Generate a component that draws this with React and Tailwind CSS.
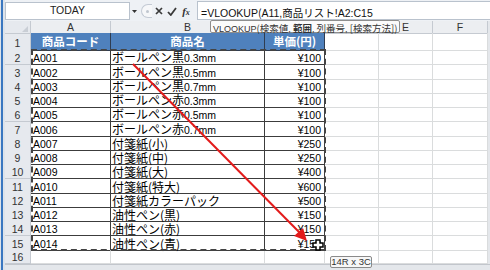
import React from "react";

const LAT = "font-['Liberation_Sans',sans-serif]";
const CJK = "font-['Noto_Sans_CJK_JP',sans-serif]";
const RE = /[A-Za-z0-9.¥=:!,]+|[^A-Za-z0-9.¥=:!,]+/g;

function Mixed({ s, lat, cjk }) {
  const parts = s.match(RE) || [];
  return (
    <span className="whitespace-pre">
      {parts.map((p, i) =>
        /[A-Za-z0-9.¥=:!,]/.test(p[0]) ? (
          <span key={i} className={`${LAT} ${lat}`}>{p}</span>
        ) : (
          <span key={i} className={`${CJK} ${cjk}`}>{p}</span>
        )
      )}
    </span>
  );
}

const rows = [
  ["A001", "ボールペン黒0.3mm", "¥100"],
  ["A002", "ボールペン黒0.5mm", "¥100"],
  ["A003", "ボールペン黒0.7mm", "¥100"],
  ["A004", "ボールペン赤0.3mm", "¥100"],
  ["A005", "ボールペン赤0.5mm", "¥100"],
  ["A006", "ボールペン赤0.7mm", "¥100"],
  ["A007", "付箋紙(小)", "¥250"],
  ["A008", "付箋紙(中)", "¥250"],
  ["A009", "付箋紙(大)", "¥400"],
  ["A010", "付箋紙(特大)", "¥600"],
  ["A011", "付箋紙カラーパック", "¥500"],
  ["A012", "油性ペン(黒)", "¥150"],
  ["A013", "油性ペン(赤)", "¥150"],
  ["A014", "油性ペン(青)", "¥150"],
];

const heights = [
  "h-[15px]", "h-[14px]", "h-[14px]", "h-[14px]", "h-[15px]", "h-[14px]", "h-[14px]",
  "h-[14px]", "h-[15px]", "h-[14px]", "h-[14px]", "h-[14px]", "h-[15px]", "h-[14px]",
];

const GRID = "grid grid-cols-[26px_80px_154px_60px_54px_54px_55px_2px]";
const RH = "bg-[#e6e9ee] border-r border-b border-[#c5cad1] flex items-end justify-center text-[10.5px] leading-[12px] text-[#333] " + LAT;
const DARK = "border-r border-b border-[#3c3c3c] flex items-end leading-[12px] whitespace-nowrap";
const LIGHT = "border-r border-b border-[#dadcdd]";

function Row({ n, h, a, b, c, last }) {
  return (
    <div className={`${GRID} ${h}`}>
      <div className={RH}>{n}</div>
      {last ? (
        <>
          <div className={LIGHT}></div>
          <div className={LIGHT}></div>
          <div className={LIGHT}></div>
        </>
      ) : (
        <>
          <div className={`${DARK} pl-[2px] text-black`}>
            <Mixed s={a} lat="text-[10.5px]" cjk="text-[12px]" />
          </div>
          <div className={`${DARK} pl-[1px] text-black`}>
            <Mixed s={b} lat="text-[10.5px]" cjk="text-[12px]" />
          </div>
          <div className={`${DARK} justify-end pr-[3px] text-black`}>
            <Mixed s={c} lat="text-[10.5px]" cjk="text-[12px]" />
          </div>
        </>
      )}
      <div className={LIGHT}></div>
      <div className={LIGHT}></div>
      <div className={LIGHT}></div>
      <div className="bg-[#e4e7eb]"></div>
    </div>
  );
}

export default function App() {
  return (
    <div className="relative w-[490px] h-[270px] overflow-hidden bg-white flex">
      {/* left window strip */}
      <div className="w-[5px] h-full bg-[#dde3ea] flex pl-[1px]">
        <div className="w-[2px] h-full bg-[#3a77c0]"></div>
      </div>

      <div className="flex-1 flex flex-col">
        {/* formula bar */}
        <div className="h-[21px] bg-[#eef1f5] flex items-start pt-[2px]">
          <div className={`w-[125px] h-[18px] bg-white border border-[#b9c2cd] flex items-center justify-center text-[10.5px] text-[#222] ${LAT}`}>
            TODAY
          </div>
          <div className="w-[8px] h-[18px] flex items-center justify-center">
            <svg width="5" height="3" viewBox="0 0 5 3"><path d="M0 0H5L2.5 3Z" fill="#333" /></svg>
          </div>
          <div className="ml-[3px] mt-[2px] w-[11px] h-[14px] rounded-l-full border border-r-0 border-[#c3cad4] bg-[#f6f7f9] flex items-center justify-center">
            <div className="w-[3px] h-[3px] rounded-full bg-[#c0c6cf]"></div>
          </div>
          <div className="w-[14px] h-[18px] flex items-center justify-center">
            <svg width="8" height="8" viewBox="0 0 8 8"><path d="M1 1L7 7M7 1L1 7" stroke="#3a3a3a" strokeWidth="1.7" /></svg>
          </div>
          <div className="w-[11px] h-[18px] flex items-center justify-center">
            <svg width="10" height="9" viewBox="0 0 10 9"><path d="M1 5L3.8 8L9 1" stroke="#3a3a3a" strokeWidth="1.8" fill="none" /></svg>
          </div>
          <div className={`w-[18px] h-[18px] flex items-center justify-center italic font-bold text-[11px] text-[#333] font-['Liberation_Serif',serif]`}>
            f<span className="text-[8px] mt-[3px]">x</span>
          </div>
          <div className="ml-[2px] flex-1 h-[19px] -mt-[1px] bg-white border border-r-0 border-[#b9c2cd] flex items-center pl-[3px] text-[#111] whitespace-nowrap">
            <Mixed s="=VLOOKUP(A11,商品リスト!A2:C15" lat="text-[10.5px]" cjk="text-[10.5px]" />
          </div>
        </div>

        {/* column headers */}
        <div className={`${GRID} h-[12px]`}>
          <div className="bg-[#e6e9ee] border-r border-b border-[#c5cad1] relative">
            <svg className="absolute right-[2px] bottom-[1px]" width="6" height="6" viewBox="0 0 6 6"><path d="M6 0V6H0Z" fill="#c9ced5" /></svg>
          </div>
          {["A", "B", "C", "D", "E", "F"].map((l) => (
            <div key={l} className={`bg-[#eceef1] border-r border-b border-[#c5cad1] flex items-center justify-center text-[10.5px] leading-[12px] text-[#333] ${LAT}`}>
              {l}
            </div>
          ))}
          <div className="bg-[#e4e7eb]"></div>
        </div>

        {/* row 1 header */}
        <div className={`${GRID} h-[17px]`}>
          <div className={RH + " pb-[1px]"}>1</div>
          <div className={`bg-[#4f81bd] border-r border-b border-[#2f3d52] flex items-center justify-center text-white font-bold text-[11.5px] ${CJK}`}>商品コード</div>
          <div className={`bg-[#4f81bd] border-r border-b border-[#2f3d52] flex items-center justify-center text-white font-bold text-[11.5px] ${CJK}`}>商品名</div>
          <div className={`bg-[#4f81bd] border-r border-b border-[#2f3d52] flex items-center justify-center text-white font-bold text-[11.5px] ${CJK}`}>単価(円)</div>
          <div className={LIGHT}></div>
          <div className={LIGHT}></div>
          <div className={LIGHT}></div>
          <div className="bg-[#e4e7eb]"></div>
        </div>

        {rows.map((r, i) => (
          <Row key={i} n={i + 2} h={heights[i]} a={r[0]} b={r[1]} c={r[2]} />
        ))}
        <Row n={16} h="h-[14px]" last />
        <div className="flex-1 bg-[#e4e7eb] border-t border-[#c2c6cc]"></div>
      </div>

      {/* copy marquee */}
      <div className="absolute left-[31px] top-[49px] w-[295px] h-[202px] border-2 border-dashed border-[#444] pointer-events-none"></div>

      {/* function tooltip */}
      <div className="absolute left-[210px] top-[20px] h-[13px] pl-[2px] pr-[2px] bg-[#fbfbfb] border border-[#8e8e8e] rounded-[2px] leading-[11px] text-[#333] whitespace-pre">
        <Mixed s="VLOOKUP(検索値, " lat="text-[9px]" cjk="text-[9.5px]" />
        <span className="font-bold"><Mixed s="範囲" lat="text-[9px]" cjk="text-[9.5px]" /></span>
        <Mixed s=", 列番号, [検索方法])" lat="text-[9px]" cjk="text-[9.5px]" />
      </div>

      {/* red arrow */}
      <svg className="absolute left-0 top-0 pointer-events-none" width="490" height="270" viewBox="0 0 490 270">
        <line x1="133" y1="64" x2="300" y2="233" stroke="#e31b1b" strokeWidth="2" />
        <path d="M307 241L294 236L303 228Z" fill="#e31b1b" />
      </svg>

      {/* cursor */}
      <svg className="absolute left-[312px] top-[239px]" width="12" height="12" viewBox="0 0 12 12">
        <path d="M4 1H8V4H11V8H8V11H4V8H1V4H4Z" fill="#fff" stroke="#000" strokeWidth="1.5" />
      </svg>

      {/* size tooltip */}
      <div className={`absolute left-[330px] top-[256px] w-[42px] h-[12px] bg-[#f7f7f7] border border-[#8a8a8a] rounded-[2px] flex items-center justify-center text-[9.5px] text-[#333] ${LAT}`}>
        14R x 3C
      </div>
    </div>
  );
}
